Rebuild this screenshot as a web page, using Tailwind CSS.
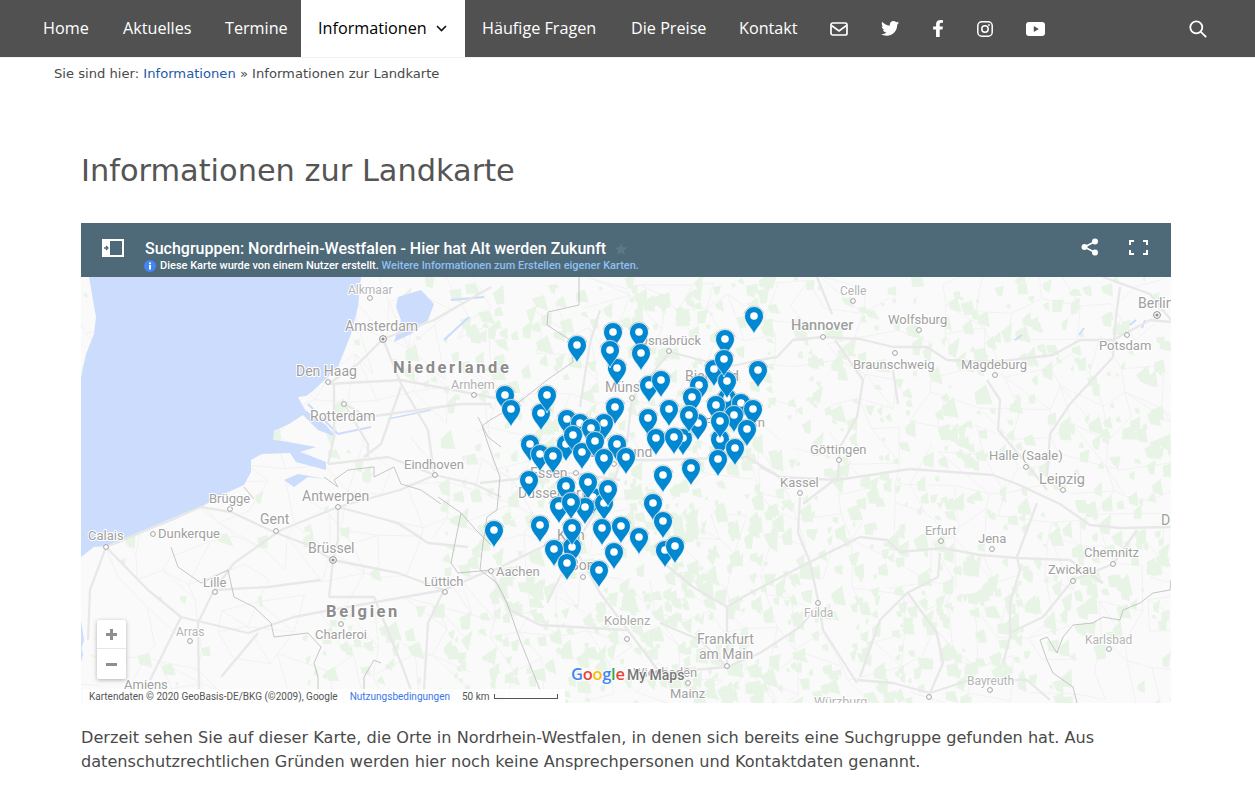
<!DOCTYPE html>
<html>
<head>
<meta charset="utf-8">
<title>Informationen zur Landkarte</title>
<script src="https://cdn.jsdelivr.net/npm/@tailwindcss/browser@4"></script>
</head>
<body class="bg-white font-['DejaVu_Sans',sans-serif] text-[#4a4a4a] overflow-hidden h-[795px]">

<!-- top navigation -->
<nav class="flex items-center h-[57px] bg-[#515151] pl-[26px] pr-[48px] font-['Open_Sans',sans-serif] text-[16.2px] text-white">
  <a class="pl-[17px] w-[80px]">Home</a>
  <a class="pl-[17px] w-[102px]">Aktuelles</a>
  <a class="pl-[17px] w-[93px]">Termine</a>
  <a class="flex items-center h-full w-[164px] pl-[17px] gap-[9px] bg-white text-black">
    Informationen
    <svg class="w-[11px] h-[7px]" viewBox="0 0 11 7" fill="none" stroke="#111" stroke-width="1.6"><path d="M1 1l4.5 4.5L10 1"/></svg>
  </a>
  <a class="pl-[17px] w-[149px]">Häufige Fragen</a>
  <a class="pl-[17px] w-[108px]">Die Preise</a>
  <a class="pl-[17px] w-[108px]">Kontakt</a>
  <div class="flex items-center">
    <svg class="w-[18px] h-[14px]" viewBox="0 0 18 14" fill="none" stroke="#fff" stroke-width="1.7"><rect x="1" y="1" width="16" height="12" rx="1.8"/><path d="M1.5 3.5L9 9l7.5-5.5"/></svg>
    <svg class="ml-[33px] w-[18px] h-[15px]" viewBox="0 50 512 416" fill="#fff"><path d="M459.37 151.716c.325 4.548.325 9.097.325 13.645 0 138.72-105.583 298.558-298.558 298.558-59.452 0-114.68-17.219-161.137-47.106 8.447.974 16.568 1.299 25.34 1.299 49.055 0 94.213-16.568 130.274-44.832-46.132-.975-84.792-31.188-98.112-72.772 6.498.974 12.995 1.624 19.818 1.624 9.421 0 18.843-1.3 27.614-3.573-48.081-9.747-84.143-51.98-84.143-102.985v-1.299c13.969 7.797 30.214 12.67 47.431 13.319-28.264-18.843-46.781-51.005-46.781-87.391 0-19.492 5.197-37.36 14.294-52.954 51.655 63.675 129.3 105.258 216.365 109.807-1.624-7.797-2.599-15.918-2.599-24.04 0-57.828 46.782-104.934 104.934-104.934 30.213 0 57.502 12.67 76.67 33.137 23.715-4.548 46.456-13.32 66.599-25.34-7.798 24.366-24.366 44.833-46.132 57.827 21.117-2.273 41.584-8.122 60.426-16.243-14.292 20.791-32.161 39.308-52.628 54.253z"/></svg>
    <svg class="ml-[34px] w-[10px] h-[17px]" viewBox="20 0 275 512" preserveAspectRatio="none" fill="#fff"><path d="M279.14 288l14.22-92.66h-88.91v-60.13c0-25.35 12.42-50.06 52.24-50.06h40.42V6.26S260.43 0 225.36 0c-73.22 0-121.08 44.38-121.08 124.72v70.62H22.89V288h81.39v224h100.17V288z"/></svg>
    <svg class="ml-[34px] w-[16px] h-[16px]" viewBox="0 0 16 16" fill="none" stroke="#fff" stroke-width="1.5"><rect x=".8" y=".8" width="14.4" height="14.4" rx="4"/><circle cx="8" cy="8" r="3.2"/><circle cx="12" cy="4" r=".9" fill="#fff" stroke="none"/></svg>
    <svg class="ml-[33px] w-[19px] h-[14px]" viewBox="0 0 19 14" fill="#fff"><path fill-rule="evenodd" d="M3 0h13a3 3 0 013 3v8a3 3 0 01-3 3H3a3 3 0 01-3-3V3a3 3 0 013-3zm4.8 4v6l5-3z"/></svg>
  </div>
  <svg class="ml-auto w-[18px] h-[18px]" viewBox="0 0 18 18" fill="none" stroke="#fff" stroke-width="1.8"><circle cx="7.3" cy="7.3" r="6"/><path d="M11.8 11.8l5.4 5.4"/></svg>
</nav>

<div class="border-t border-[#f3f3f3] pl-[54px] pt-[7px] text-[13.14px] leading-[17px]">Sie sind hier: <a class="text-[#1e5aa8]">Informationen</a> » Informationen zur Landkarte</div>

<main class="ml-[81px] w-[1090px]">
  <h1 class="mt-[69px] text-[30.4px] leading-[40px] text-[#555]">Informationen zur Landkarte</h1>

  <!-- embedded map -->
  <section class="relative mt-[32px] h-[480px] overflow-hidden font-['Roboto',sans-serif]">
    <header class="flex items-center h-[54px] bg-[#4e6977] text-white">
      <svg class="ml-[21px] w-[22px] h-[18px] -mt-[4px]" viewBox="0 0 22 18" fill="none" stroke="#fff" stroke-width="2"><path d="M8 1h13v16H8"/><rect x="0" y="0" width="8" height="18" fill="#fff" stroke="none"/><path d="M2 9h3M4 7l2 2-2 2" stroke="#4e6977" stroke-width="1.3"/></svg>
      <div class="ml-[21px] mt-[12px]">
        <div class="flex items-center leading-[20px] text-[16px] font-medium">Suchgruppen: Nordrhein-Westfalen - Hier hat Alt werden Zukunft
          <svg class="ml-[8px] w-[14px] h-[14px]" viewBox="0 0 24 24" fill="#5f7684"><path d="M12 1.5l3.2 7 7.6.8-5.7 5.1 1.6 7.5L12 18l-6.7 3.9 1.6-7.5-5.7-5.1 7.6-.8z"/></svg>
        </div>
        <div class="flex items-center -ml-[1px] text-[11px] leading-[14px] font-medium">
          <svg class="mr-[4px] w-[12px] h-[12px]" viewBox="0 0 12 12"><circle cx="6" cy="6" r="6" fill="#4285f4"/><rect x="5" y="5" width="2" height="4.5" fill="#fff"/><rect x="5" y="2.5" width="2" height="1.7" fill="#fff"/></svg>
          Diese Karte wurde von einem Nutzer erstellt.&nbsp;<a class="text-[#8fc0f4]">Weitere Informationen zum Erstellen eigener Karten.</a>
        </div>
      </div>
      <svg class="ml-auto w-[18px] h-[18px] -mt-[6px]" viewBox="0 0 18 18" fill="#fff"><circle cx="14" cy="3.5" r="3"/><circle cx="3.5" cy="9" r="3"/><circle cx="14" cy="14.5" r="3"/><path d="M3.5 9L14 3.5M3.5 9L14 14.5" stroke="#fff" stroke-width="1.6"/></svg>
      <svg class="ml-[30px] mr-[23px] w-[19px] h-[15px] -mt-[6px]" viewBox="0 0 19 15" fill="none" stroke="#fff" stroke-width="2"><path d="M1 5V1h4M14 1h4v4M1 10v4h4M18 10v4h-4"/></svg>
    </header>

    <svg id="map" class="block w-[1090px] h-[426px]" viewBox="81 277 1090 426" font-family="Roboto, sans-serif">
      <defs>
        <g id="pin">
          <path d="M-10.1,-2 A10.4,10.4 0 0 1 10.1,-2" fill="none" stroke="#9a9a9a" stroke-width=".6"/>
          <path d="M0,18 C-2,12 -9.5,7 -9.5,0 A9.5,9.5 0 1 1 9.5,0 C9.5,7 2,12 0,18 Z" fill="#0288d1" stroke="#fff" stroke-width=".7"/>
          <circle r="3.8" fill="#fff"/>
        </g>
        <g id="city"><circle r="2.4" fill="#fff" stroke="#a3a3a3" stroke-width="1"/></g>
        <g id="capital"><circle r="3.4" fill="#fff" stroke="#8f8f8f" stroke-width="1"/><circle r="1.6" fill="#8f8f8f"/></g>
      </defs>
      <rect x="81" y="277" width="1090" height="426" fill="#fafafa"/>
      <g id="minor" fill="none" stroke="#f0f0f0" stroke-width=".9"></g>
      <g id="green" fill="#e8f4e6"></g>

      <!-- sea and inland water -->
      <g fill="#cbdcfc">
        <path d="M89,277 L96,317 L94,334 L86,354 L81,377 L81,557 L94,547 L114,545 L144,532 L174,520 L201,507 L224,494 L244,485 L251,472 L251,460 L262,454 L290,453 L296,462 L326,470 L326,462 L300,452 L316,447 L282,441 L273,440 L274,431 L289,424 L303,415 L318,430 L336,437 L326,425 L305,410 L300,401 L298,397 L306,396 L314,390 L338,367 L351,334 L358,307 L361,277 Z"/>
        <path d="M284,480 L298,474 L326,479 L308,477 L294,487 Z"/>
        <path d="M398,297 L421,290 L434,304 L428,320 L411,334 L394,342 L401,320 L396,307 Z"/>
        <path d="M81,620 L84,640 L81,650 Z M81,645 L83,655 L81,662 Z"/>
      </g>
      <g fill="none" stroke="#cbdcfc">
        <path d="M444,340 L469,317" stroke-width="2"/><path d="M451,300 L484,297" stroke-width="2"/>
        <path d="M388,419 L431,410" stroke-width="1.5"/><path d="M308,404 L338,434 L371,427" stroke-width="2"/>
        <path d="M1079,335 L1084,328 M1130,325 L1136,320 M1145,320 L1142,328 M1015,340 L1022,335" stroke-width="2"/>
      </g>

      <!-- main roads -->
      <g fill="none" stroke="#e8e8e8" stroke-width="2.3" stroke-linejoin="round">
        <path d="M823,337 L860,339 L893,347 L927,347 L947,360 L993,362 L1053,355 L1080,340 L1113,340 L1150,320 L1171,322"/>
        <path d="M823,337 L793,340 L777,357 L760,360 L727,367 L670,352"/>
        <path d="M832,314 L817,277 M835,340 L863,380 L857,417 L840,447 L838,477 L803,504"/>
        <path d="M893,370 L898,404 M987,380 L1000,400 L998,430 L1027,464 L1047,490"/>
        <path d="M1113,357 L1070,404 L1050,434 L1047,477 M1120,287 L1116,317 L1113,357 M1103,277 L1150,294 L1171,320"/>
        <path d="M760,467 L780,477 L837,480 L910,469 L993,475 L1017,484 L1060,504 L1090,525 L1120,528 L1171,527"/>
        <path d="M860,537 L887,540 L900,552 L943,548 L980,555 L1017,558 L1070,560 L1103,583"/>
        <path d="M1037,503 L1017,557 L1020,570 L1010,603 L1010,637 L1003,663"/>
        <path d="M660,560 L693,587 L727,607 L743,597 L810,562 L860,537"/>
        <path d="M800,497 L798,533 L810,562 L818,600 L823,630 L857,683"/>
        <path d="M908,593 L937,633 L943,663 L930,693 M940,553 L938,577 L907,593 L880,620 L860,677"/>
        <path d="M857,680 L893,683 L930,693 L970,680 L1027,680 L1050,700"/>
        <path d="M727,667 L760,653 L800,627 L817,607 M727,607 L727,667 L660,673 L600,593 L570,540"/>
        <path d="M1073,580 L1043,617 L1010,633 M1137,530 L1113,564 L1073,580 M660,623 L700,640 L727,667"/>
        <path d="M580,407 L590,343 L600,310 M630,460 L663,460 L747,457 L780,477 M480,483 L573,473 L620,480"/>
        <path d="M632,398 L627,443 L613,483 L580,537 L547,603 M670,352 L633,397 M490,572 L563,537 L580,527"/>
        <path d="M383,339 L401,384 L428,430 L434,474 M328,384 L401,380 L474,394 L505,400"/>
        <path d="M344,404 L368,417 L461,404 L491,404 M383,339 L434,320 L491,287 M334,384 L334,437 L328,464"/>
        <path d="M344,404 L368,444 L368,457 M435,475 L388,457 L328,464 M435,475 L474,484 L501,497"/>
        <path d="M401,387 L381,444 L364,457 M383,339 L358,364 L328,384 M435,475 L400,490 L338,507"/>
        <path d="M201,507 L231,512 L274,532 L308,545 L333,560 M338,507 L281,530 L234,563 L214,590"/>
        <path d="M338,507 L338,540 L333,560 L329,597 M333,560 L398,573 L444,590 L491,570 M338,507 L398,523 L428,543 L468,547"/>
        <path d="M214,590 L268,587 L321,580 M106,547 L148,590 L181,617 L248,633 L294,617 L331,610 L444,590"/>
        <path d="M214,590 L198,623 L199,690 M258,633 L221,677 M329,597 L374,597 L401,663 L411,690 M444,590 L428,623 L424,690"/>
        <path d="M106,547 L201,507 M106,547 L90,590 L88,640 M181,617 L150,680 M491,572 L510,610 L540,625 L627,630"/>
      </g>

      <!-- borders -->
      <g fill="none" stroke="#b9b9b9" stroke-width=".8">
        <path d="M579,277 L579,305 L548,312 L547,325 L570,340 L573,362 L547,380 L513,407 L490,420 L482,426 L490,450 L500,477 L497,510 L487,517 L483,543 L480,570 L497,583 L507,603 L520,640 L540,690"/>
        <path d="M478,417 L488,437 L501,447 M441,504 L421,490 L401,484 L394,467 L374,477 L374,467 L348,470 L334,480 L338,487 L324,477 M254,499 L244,487"/>
        <path d="M438,497 L461,513 L451,563 L458,573 L491,570 M461,513 L476,530 L491,545"/>
        <path d="M171,547 L178,567 L201,583 L228,570 L234,597 L254,607 L271,623 L274,637 L308,633 L321,647 L314,663 L318,677 L318,703 M364,703 L364,677 L374,660 L381,663"/>
        <path d="M1171,580 L1170,590 L1153,593 L1140,603 L1123,610 L1120,620 L1103,617 L1093,623 L1073,625 L1063,637 L1057,653 L1047,637 L1040,640 L1047,660 L1053,673 L1073,687 L1077,703"/>
      </g>

      <!-- town markers -->
      <g fill="none">
        <use href="#city" x="370" y="298"/><use href="#capital" x="383" y="339"/><use href="#city" x="328" y="382"/><use href="#city" x="344" y="404"/>
        <use href="#city" x="474" y="395"/><use href="#city" x="435" y="475"/><use href="#city" x="338" y="507"/><use href="#city" x="230" y="509"/>
        <use href="#city" x="276" y="531"/><use href="#city" x="106" y="547"/><use href="#city" x="153" y="534"/><use href="#capital" x="333" y="560"/>
        <use href="#city" x="215" y="592"/><use href="#city" x="445" y="592"/><use href="#city" x="341" y="624"/><use href="#city" x="190" y="641"/>
        <use href="#city" x="491" y="571"/><use href="#city" x="669" y="351"/><use href="#city" x="632" y="398"/><use href="#city" x="614" y="464"/>
        <use href="#city" x="576" y="473"/><use href="#city" x="583" y="577"/><use href="#city" x="823" y="337"/><use href="#city" x="853" y="301"/>
        <use href="#city" x="919" y="330"/><use href="#city" x="895" y="353"/><use href="#city" x="995" y="375"/><use href="#capital" x="1157" y="315"/>
        <use href="#city" x="1127" y="335"/><use href="#city" x="1026" y="467"/><use href="#city" x="1063" y="490"/><use href="#city" x="800" y="493"/>
        <use href="#city" x="839" y="460"/><use href="#city" x="941" y="541"/><use href="#city" x="992" y="549"/><use href="#city" x="1113" y="564"/>
        <use href="#city" x="1073" y="581"/><use href="#city" x="818" y="603"/><use href="#city" x="1109" y="649"/><use href="#city" x="727" y="666"/>
        <use href="#city" x="688" y="683"/><use href="#city" x="687" y="671"/><use href="#city" x="627" y="639"/><use href="#city" x="990" y="690"/>
        <use href="#city" x="929" y="697"/>
      </g>

      <!-- place names -->
      <g fill="#a0a0a0" stroke="#fff" stroke-width="2" stroke-linejoin="round" paint-order="stroke" font-size="13">
        <text x="348" y="294" font-size="12" fill="#b4b4b4">Alkmaar</text>
        <text x="345" y="331" font-size="14">Amsterdam</text>
        <text x="296" y="376" font-size="14">Den Haag</text>
        <text x="451" y="389" font-size="12.5" fill="#b0b0b0">Arnhem</text>
        <text x="310" y="421" font-size="14">Rotterdam</text>
        <text x="404" y="469">Eindhoven</text>
        <text x="209" y="503">Brügge</text>
        <text x="302" y="501" font-size="14">Antwerpen</text>
        <text x="260" y="524" font-size="14">Gent</text>
        <text x="88" y="540">Calais</text>
        <text x="158" y="538">Dunkerque</text>
        <text x="308" y="553" font-size="14">Brüssel</text>
        <text x="203" y="587">Lille</text>
        <text x="424" y="586">Lüttich</text>
        <text x="176" y="636" font-size="12" fill="#b4b4b4">Arras</text>
        <text x="315" y="639">Charleroi</text>
        <text x="124" y="689">Amiens</text>
        <text x="496" y="576">Aachen</text>
        <text x="639" y="345">Osnabrück</text>
        <text x="605" y="392" font-size="14">Münster</text>
        <text x="685" y="381" font-size="14">Bielefeld</text>
        <text x="590" y="457" font-size="14">Dortmund</text>
        <text x="530" y="478" font-size="14">Essen</text>
        <text x="518" y="498" font-size="14">Düsseldorf</text>
        <text x="557" y="540" font-size="14">Köln</text>
        <text x="570" y="570" font-size="14">Bonn</text>
        <text x="765" y="427" text-anchor="end">Paderborn</text>
        <text x="780" y="487">Kassel</text>
        <text x="810" y="454">Göttingen</text>
        <text x="791" y="330" font-size="14.5" font-weight="500" fill="#a0a0a0">Hannover</text>
        <text x="840" y="295" font-size="12" fill="#b4b4b4">Celle</text>
        <text x="888" y="324">Wolfsburg</text>
        <text x="853" y="369">Braunschweig</text>
        <text x="961" y="369">Magdeburg</text>
        <text x="1138" y="308" font-size="14">Berlin</text>
        <text x="1099" y="350">Potsdam</text>
        <text x="989" y="460">Halle (Saale)</text>
        <text x="1039" y="484" font-size="14.5">Leipzig</text>
        <text x="925" y="535" font-size="12.5" fill="#aaa">Erfurt</text>
        <text x="978" y="543">Jena</text>
        <text x="1084" y="557">Chemnitz</text>
        <text x="1048" y="574">Zwickau</text>
        <text x="1161" y="525" font-size="14">Dresden</text>
        <text x="804" y="617" font-size="12" fill="#b4b4b4">Fulda</text>
        <text x="1085" y="644" font-size="12" fill="#b4b4b4">Karlsbad</text>
        <text x="697" y="644" font-size="14">Frankfurt</text>
        <text x="699" y="659" font-size="14">am Main</text>
        <text x="670" y="698">Mainz</text>
        <text x="633" y="677">Wiesbaden</text>
        <text x="604" y="625" fill="#aaa">Koblenz</text>
        <text x="967" y="685" font-size="12" fill="#b4b4b4">Bayreuth</text>
        <text x="814" y="706" font-size="12.5" fill="#b4b4b4">Würzburg</text>
        <text x="393" y="373" font-size="16.5" font-weight="700" letter-spacing="2.6" fill="#8c8c8c">Niederlande</text>
        <text x="326" y="617" font-size="16.5" font-weight="700" letter-spacing="2.6" fill="#8c8c8c">Belgien</text>
      </g>

      <!-- markers -->
      <g>
        <use href="#pin" x="754" y="316"/><use href="#pin" x="613" y="332"/><use href="#pin" x="639" y="332"/><use href="#pin" x="725" y="339"/>
        <use href="#pin" x="577" y="345"/><use href="#pin" x="641" y="353"/><use href="#pin" x="617" y="368"/><use href="#pin" x="610" y="350"/>
        <use href="#pin" x="714" y="369"/><use href="#pin" x="758" y="370"/><use href="#pin" x="699" y="385"/><use href="#pin" x="649" y="385"/>
        <use href="#pin" x="661" y="380"/><use href="#pin" x="727" y="398"/><use href="#pin" x="727" y="381"/><use href="#pin" x="724" y="359"/>
        <use href="#pin" x="692" y="397"/><use href="#pin" x="505" y="395"/><use href="#pin" x="511" y="409"/><use href="#pin" x="541" y="413"/>
        <use href="#pin" x="547" y="395"/><use href="#pin" x="615" y="407"/><use href="#pin" x="716" y="405"/><use href="#pin" x="741" y="403"/>
        <use href="#pin" x="753" y="409"/><use href="#pin" x="698" y="423"/><use href="#pin" x="604" y="423"/><use href="#pin" x="567" y="419"/>
        <use href="#pin" x="580" y="423"/><use href="#pin" x="669" y="409"/><use href="#pin" x="648" y="418"/><use href="#pin" x="683" y="438"/>
        <use href="#pin" x="689" y="415"/><use href="#pin" x="734" y="415"/><use href="#pin" x="747" y="429"/><use href="#pin" x="720" y="439"/>
        <use href="#pin" x="720" y="421"/><use href="#pin" x="591" y="428"/><use href="#pin" x="566" y="444"/><use href="#pin" x="573" y="435"/>
        <use href="#pin" x="530" y="444"/><use href="#pin" x="540" y="454"/><use href="#pin" x="553" y="456"/><use href="#pin" x="582" y="452"/>
        <use href="#pin" x="595" y="441"/><use href="#pin" x="617" y="444"/><use href="#pin" x="656" y="438"/><use href="#pin" x="674" y="437"/>
        <use href="#pin" x="626" y="457"/><use href="#pin" x="604" y="458"/><use href="#pin" x="735" y="448"/><use href="#pin" x="718" y="459"/>
        <use href="#pin" x="663" y="475"/><use href="#pin" x="691" y="468"/><use href="#pin" x="529" y="480"/><use href="#pin" x="566" y="486"/>
        <use href="#pin" x="593" y="497"/><use href="#pin" x="588" y="482"/><use href="#pin" x="604" y="503"/><use href="#pin" x="608" y="489"/>
        <use href="#pin" x="559" y="506"/><use href="#pin" x="585" y="507"/><use href="#pin" x="571" y="502"/><use href="#pin" x="653" y="503"/>
        <use href="#pin" x="663" y="521"/><use href="#pin" x="540" y="525"/><use href="#pin" x="494" y="530"/><use href="#pin" x="572" y="547"/>
        <use href="#pin" x="572" y="528"/><use href="#pin" x="602" y="528"/><use href="#pin" x="621" y="526"/><use href="#pin" x="639" y="537"/>
        <use href="#pin" x="554" y="549"/><use href="#pin" x="665" y="550"/><use href="#pin" x="675" y="546"/><use href="#pin" x="614" y="552"/>
        <use href="#pin" x="567" y="563"/><use href="#pin" x="599" y="570"/>
      </g>

      <!-- logo -->
      <text x="571" y="680" font-family="'Open Sans', sans-serif" font-size="16.5" font-weight="600" stroke="#fff" stroke-width="1.6" paint-order="stroke" letter-spacing="-.3"><tspan fill="#4285f4">G</tspan><tspan fill="#ea4335">o</tspan><tspan fill="#fbbc05">o</tspan><tspan fill="#4285f4">g</tspan><tspan fill="#34a853">l</tspan><tspan fill="#ea4335">e</tspan></text>
      <text x="627" y="680" font-size="14" font-weight="500" fill="#777" stroke="#fff" stroke-width="1.6" paint-order="stroke">My Maps</text>
    </svg>

    <!-- zoom control -->
    <div class="absolute left-[16px] top-[397px] flex flex-col w-[29px] h-[59px] bg-white rounded-[2px] shadow-[0_1px_4px_rgba(0,0,0,0.3)]">
      <div class="flex items-center justify-center h-[29px] border-b border-[#e6e6e6]"><svg class="w-[11px] h-[11px]" viewBox="0 0 11 11" fill="#8f8f8f"><path d="M4 0h3v4h4v3H7v4H4V7H0V4h4z"/></svg></div>
      <div class="flex items-center justify-center flex-1"><svg class="w-[11px] h-[3px]" viewBox="0 0 11 3" fill="#8f8f8f"><rect width="11" height="3"/></svg></div>
    </div>

    <!-- attribution bar -->
    <div class="absolute left-[2px] bottom-0 flex items-center w-[482px] h-[14px] pl-[6px] bg-white/80 text-[10px] text-[#555] whitespace-nowrap">
      <span>Kartendaten © 2020 GeoBasis-DE/BKG (©2009), Google</span>
      <a class="ml-[12px] text-[#3b78e7]">Nutzungsbedingungen</a>
      <span class="ml-[12px]">50 km</span>
      <span class="ml-[4px] w-[64px] h-[5px] border border-t-0 border-[#555]"></span>
    </div>
  </section>

  <p class="mt-[23px] text-[16.13px] leading-[24px]">Derzeit sehen Sie auf dieser Karte, die Orte in Nordrhein-Westfalen, in denen sich bereits eine Suchgruppe gefunden hat. Aus datenschutzrechtlichen Gründen werden hier noch keine Ansprechpersonen und Kontaktdaten genannt.</p>
  <p class="mt-[17px] text-[16.13px] leading-[24px]">Nach und nach sollen weitere Orte hinzukommen, sobald sich dort neue Gruppen gebildet haben und wir davon erfahren haben.</p>
</main>

<script>
  // faint back roads and patches of woodland, drawn under the water and main roads
  let seed = 20;
  const rnd = () => (seed = (seed * 16807) % 2147483647) / 2147483647;
  const minor = document.getElementById("minor");
  const green = document.getElementById("green");
  const NS = "http://www.w3.org/2000/svg";

  const step = 30;
  const nodes = [];
  for (let i = 0; i <= 37; i++) {
    nodes[i] = [];
    for (let j = 0; j <= 15; j++) {
      nodes[i][j] = [81 + i * step + (rnd() - 0.5) * 28, 277 + j * step + (rnd() - 0.5) * 28];
    }
  }
  let d = "";
  for (let i = 0; i < 37; i++) {
    for (let j = 0; j < 15; j++) {
      const a = nodes[i][j];
      if (rnd() < 0.55) d += `M${a[0]},${a[1]}L${nodes[i + 1][j][0]},${nodes[i + 1][j][1]}`;
      if (rnd() < 0.55) d += `M${a[0]},${a[1]}L${nodes[i][j + 1][0]},${nodes[i][j + 1][1]}`;
      if (rnd() < 0.25) d += `M${a[0]},${a[1]}L${nodes[i + 1][j + 1][0]},${nodes[i + 1][j + 1][1]}`;
    }
  }
  const roads = document.createElementNS(NS, "path");
  roads.setAttribute("d", d);
  minor.appendChild(roads);

  function density(x, y) {
    if (x < 440) return y > 600 && x > 300 ? 0.35 : x > 400 && y < 420 ? 0.2 : 0.04;
    if (x > 620 && x < 800 && y > 480) return 0.95;
    if (x > 860 && x < 1030 && y > 500) return 0.9;
    if (x > 440 && x < 620 && y > 580) return 0.75;
    return 0.45;
  }
  for (let n = 0; n < 3000; n++) {
    const x = 81 + rnd() * 1090;
    const y = 277 + rnd() * 426;
    if (rnd() > density(x, y)) continue;
    const s = 3 + rnd() * 9;
    const p = document.createElementNS(NS, "polygon");
    p.setAttribute("points", `${x},${y} ${x + s},${y - s * rnd()} ${x + s * (0.6 + rnd())},${y + s} ${x + s * rnd() * 0.4},${y + s * (0.5 + rnd() * 0.6)}`);
    green.appendChild(p);
  }
</script>
</body>
</html>
